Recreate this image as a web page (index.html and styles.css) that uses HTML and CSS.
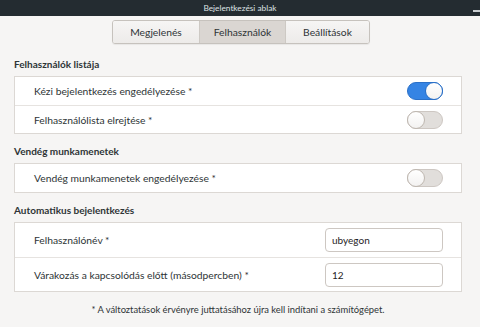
FILE: index.html
```
<!DOCTYPE html>
<html lang="hu">
<head>
<meta charset="utf-8">
<link rel="stylesheet" href="styles.css">
</head>
<body>
<div class="titlebar">
  <span class="title">Bejelentkezési ablak</span>
  <span class="minimize"></span>
</div>
<div class="tabs-wrap">
  <div class="tabs">
    <div class="tab tab-first">Megjelenés</div>
    <div class="tab tab-active">Felhasználók</div>
    <div class="tab tab-last">Beállítások</div>
  </div>
</div>
<main class="content">
  <section class="section">
    <h2 class="heading">Felhasználók listája</h2>
    <div class="box">
      <div class="row row-toggle">
        <span class="label">Kézi bejelentkezés engedélyezése *</span>
        <span class="switch switch-on"><span class="knob"></span></span>
      </div>
      <div class="row row-toggle">
        <span class="label">Felhasználólista elrejtése *</span>
        <span class="switch"><span class="knob"></span></span>
      </div>
    </div>
  </section>
  <section class="section">
    <h2 class="heading">Vendég munkamenetek</h2>
    <div class="box">
      <div class="row row-toggle">
        <span class="label">Vendég munkamenetek engedélyezése *</span>
        <span class="switch"><span class="knob"></span></span>
      </div>
    </div>
  </section>
  <section class="section">
    <h2 class="heading">Automatikus bejelentkezés</h2>
    <div class="box">
      <div class="row row-input">
        <span class="label">Felhasználónév *</span>
        <span class="entry">ubyegon</span>
      </div>
      <div class="row row-input">
        <span class="label">Várakozás a kapcsolódás előtt (másodpercben) *</span>
        <span class="entry">12</span>
      </div>
    </div>
  </section>
  <p class="note">* A változtatások érvényre juttatásához újra kell indítani a számítógépet.</p>
</main>
</body>
</html>
```
FILE: styles.css
```
* { box-sizing: border-box; }
html, body { margin: 0; padding: 0; }
body {
  width: 480px;
  height: 327px;
  overflow: hidden;
  background: #f6f5f4;
  color: #2e3436;
  font-family: Lato, "Noto Sans", sans-serif;
  font-size: 10px;
}
.titlebar {
  height: 16px;
  background: #242c31;
  display: flex;
  align-items: center;
  justify-content: center;
  position: relative;
}
.title {
  color: #dfe2e4;
  font-size: 8.3px;
  line-height: 16px;
}
.minimize {
  position: absolute;
  right: 0;
  top: 10px;
  width: 7px;
  height: 2px;
  background: #c9cdd0;
}
.tabs-wrap {
  display: flex;
  justify-content: center;
  padding-top: 4px;
  padding-left: 2px;
}
.tabs {
  display: flex;
  height: 24px;
  border: 1px solid #c6c2bd;
  border-radius: 3px;
  overflow: hidden;
  box-shadow: 0 1px 1px rgba(0,0,0,0.06);
}
.tab {
  width: 86px;
  display: flex;
  align-items: center;
  justify-content: center;
  background: linear-gradient(#f6f5f4, #edebe9);
  color: #2e3436;
  font-size: 10.3px;
}
.tab + .tab { border-left: 1px solid #cdc9c4; }
.tab-last { width: 84px; }
.tab-active {
  background: #dad6d2;
}
.content {
  padding: 13px 18px 0 14px;
}
.section + .section { margin-top: 10px; }
.heading {
  margin: 0 0 5px 0;
  font-size: 10px;
  font-weight: bold;
  line-height: 14px;
}
.box {
  background: #ffffff;
  border: 1px solid #dcd8d4;
}
.row {
  display: flex;
  align-items: center;
  justify-content: space-between;
  padding: 0 18px 0 19px;
  font-size: 10.3px;
}
.row + .row { border-top: 1px solid #e6e3e0; }
.row-toggle { height: 28px; }
.row-input { height: 34px; }
.label { line-height: 14px; }
.switch {
  width: 36px;
  height: 18px;
  border-radius: 9px;
  background: #e1dedb;
  border: 1px solid #cdc7c2;
  display: flex;
  align-items: center;
  justify-content: flex-start;
}
.switch-on {
  background: #3584e4;
  border-color: #2a70c8;
  justify-content: flex-end;
}
.knob {
  width: 18px;
  height: 18px;
  margin: -1px;
  border-radius: 50%;
  background: linear-gradient(#ffffff, #f3f2f1);
  border: 1px solid #bfb8b1;
}
.switch-on .knob { border-color: #2a70c8; }
.entry {
  width: 118px;
  height: 24px;
  border: 1px solid #cdc7c2;
  border-radius: 4px;
  background: #ffffff;
  padding: 0 6px;
  display: flex;
  align-items: center;
  font-size: 10px;
  color: #1f2426;
}
.note {
  margin: 11px 0 0 0;
  text-align: center;
  font-size: 9.4px;
  line-height: 14px;
}
```
